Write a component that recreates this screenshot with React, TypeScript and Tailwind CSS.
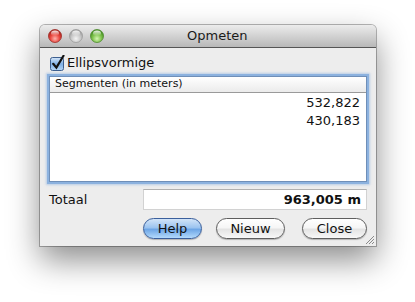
import type { ReactNode } from 'react';

const FONT = { fontFamily: '"DejaVu Sans", "Lucida Grande", sans-serif' };

/** Rood, grijs, groen: de drie knopjes linksboven. */
const LICHTEN = [
  { id: 'rood', licht: '#ffb3ad', midden: '#e9453d', donker: '#a5201a', rand: '#9b2b26' },
  { id: 'grijs', licht: '#f4f4f4', midden: '#c9c9c9', donker: '#9a9a9a', rand: '#9c9c9c' },
  { id: 'groen', licht: '#d6f7b4', midden: '#7cc14a', donker: '#3f8a1c', rand: '#4d8a2d' },
];

const SEGMENTEN = ['532,822', '430,183'];

function Licht({ id, licht, midden, donker, rand }: (typeof LICHTEN)[number]) {
  return (
    <svg width="14" height="14" viewBox="0 0 14 14">
      <defs>
        <radialGradient id={`g-${id}`} cx="50%" cy="70%" r="65%">
          <stop offset="0%" stopColor={licht} />
          <stop offset="55%" stopColor={midden} />
          <stop offset="100%" stopColor={donker} />
        </radialGradient>
        <linearGradient id={`h-${id}`} x1="0" y1="0" x2="0" y2="1">
          <stop offset="0%" stopColor="#fff" stopOpacity="0.9" />
          <stop offset="100%" stopColor="#fff" stopOpacity="0" />
        </linearGradient>
      </defs>
      <circle cx="7" cy="7" r="6.5" fill={`url(#g-${id})`} stroke={rand} strokeWidth="0.8" />
      <ellipse cx="7" cy="4.2" rx="4" ry="2.6" fill={`url(#h-${id})`} />
    </svg>
  );
}

function Vinkje() {
  return (
    <svg width="17" height="16" viewBox="0 0 17 16" className="shrink-0">
      <defs>
        <linearGradient id="vak" x1="0" y1="0" x2="0" y2="1">
          <stop offset="0%" stopColor="#d6e6f8" />
          <stop offset="50%" stopColor="#7fb0e6" />
          <stop offset="100%" stopColor="#b7d7f7" />
        </linearGradient>
      </defs>
      <rect x="1.5" y="2.5" width="13" height="13" rx="2" fill="url(#vak)" stroke="#3d5f8f" />
      <path d="M4.2 8.8 L7.4 12.6 L14.5 0.8" fill="none" stroke="#111" strokeWidth="2.2" strokeLinecap="round" />
    </svg>
  );
}

function Knop({ children, breed, blauw }: { children: ReactNode; breed: string; blauw?: boolean }) {
  return (
    <div
      className={`flex h-[21px] items-center justify-center rounded-full border text-[13px] text-[#111] ${breed} ${
        blauw
          ? 'border-[#3a5f9c] bg-[linear-gradient(to_bottom,#d2e4f8_0%,#9cc4f0_45%,#6ea6e6_55%,#b3dafc_100%)]'
          : 'border-[#5e5e5e] bg-[linear-gradient(to_bottom,#ffffff_0%,#f6f6f6_45%,#e4e4e4_55%,#f8f8f8_100%)]'
      } shadow-[0_1px_1px_rgba(0,0,0,0.25)]`}
    >
      {children}
    </div>
  );
}

export default function App() {
  return (
    <div className="h-[302px] w-[415px] overflow-hidden bg-white pl-[40px] pt-[25px]" style={FONT}>
      <div className="w-[336px] rounded-t-[5px] bg-[#ededed] shadow-[0_0_0_1px_rgba(0,0,0,0.28),0_14px_32px_rgba(0,0,0,0.45)]">
        {/* titelbalk */}
        <div className="flex h-[23px] items-center rounded-t-[5px] border-b border-[#555] bg-[linear-gradient(to_bottom,#ececec,#b8b8b8)]">
          <div className="flex gap-[7px] pl-[8px]">
            {LICHTEN.map((l) => (
              <Licht key={l.id} {...l} />
            ))}
          </div>
          <span className="ml-[83px] text-[13px] text-[#1a1a1a]">Opmeten</span>
        </div>

        <div className="relative px-[9px] pb-[7px] pt-[7px]">
          <div className="flex h-[16px] items-center gap-[1px] text-[13px] text-[#111]">
            <Vinkje />
            <span>Ellipsvormige</span>
          </div>

          {/* lijst met segmenten */}
          <div className="mt-[5px] flex h-[106px] flex-col border border-[#6f8fb8] bg-white shadow-[0_0_0_2px_#8cb2df,0_0_2px_3px_rgba(140,178,223,0.55)]">
            <div className="flex h-[16px] items-center border-b border-[#9a9a9a] bg-[linear-gradient(to_bottom,#ffffff,#ebebeb)] pl-[5px] text-[11px] text-[#111]">
              Segmenten (in meters)
            </div>
            <div className="flex flex-col pr-[6px] pt-[1px] text-[13px] text-[#111]">
              {SEGMENTEN.map((s) => (
                <div key={s} className="flex h-[18px] items-center justify-end">
                  {s}
                </div>
              ))}
            </div>
          </div>

          <div className="mt-[7px] flex h-[21px] items-center">
            <span className="w-[94px] text-[13px] text-[#111]">Totaal</span>
            <div className="flex h-full flex-1 items-center justify-end border border-[#d2d2d2] border-t-[#b0b0b0] bg-white pr-[5px] text-[13px] font-bold text-[#111]">
              963,005 m
            </div>
          </div>

          <div className="mt-[8px] flex justify-end">
            <Knop breed="w-[59px]" blauw>
              Help
            </Knop>
            <div className="w-[14px]" />
            <Knop breed="w-[69px]">Nieuw</Knop>
            <div className="w-[17px]" />
            <Knop breed="w-[65px]">Close</Knop>
          </div>

          {/* greep rechtsonder */}
          <svg width="11" height="11" viewBox="0 0 11 11" className="absolute bottom-[1px] right-[1px]">
            <path d="M10 2 L2 10 M10 5 L5 10 M10 8 L8 10" stroke="#8a8a8a" strokeWidth="1" />
          </svg>
        </div>
      </div>
    </div>
  );
}
